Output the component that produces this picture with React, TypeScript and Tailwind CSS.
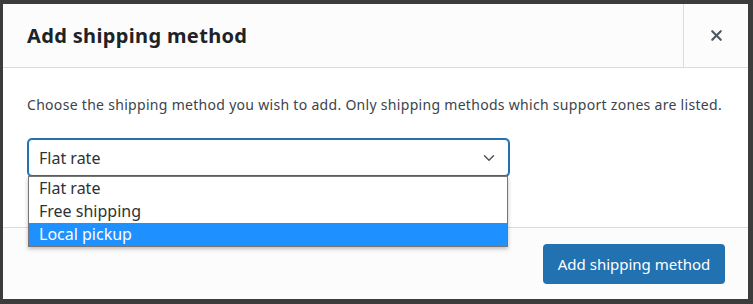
import { ChevronDown, X } from 'lucide-react'

const OPTIONS = ['Flat rate', 'Free shipping', 'Local pickup']

function App() {
    return (
        <div className="h-[304px] w-[753px] overflow-hidden bg-[#3c3c3c] pl-[3px] pt-[4px] font-['Noto_Sans','Open_Sans',sans-serif]">
            <div className="flex h-[295px] w-[745px] flex-col bg-white">
                <header className="flex h-[64px] shrink-0 items-stretch border-b border-[#dcdcde] bg-[#fcfcfc]">
                    <h1 className="flex flex-1 items-center pl-[24px] text-[20px] font-bold tracking-[0.35px] text-[#1d2327]">
                        Add shipping method
                    </h1>
                    <button className="flex w-[65px] items-center justify-center border-l border-[#dcdcde] text-[#50575e]">
                        <X size={17} strokeWidth={3} />
                    </button>
                </header>

                <div className="relative flex-1 px-[24px] pt-[26px]">
                    <p className="whitespace-nowrap text-[14px] tracking-[0.3px] text-[#3c434a]">
                        Choose the shipping method you wish to add. Only shipping methods which support zones are listed.
                    </p>
                    <div className="relative mt-[24px] ml-[1px] w-[481px]">
                        <div className="flex h-[37px] items-center justify-between rounded-[4px] border border-[#2271b1] bg-white pl-[10px] pr-[10px] shadow-[0_0_0_1px_#2271b1] text-[16px] text-[#2c3338]">
                            <span>Flat rate</span>
                            <ChevronDown size={18} strokeWidth={2} className="text-[#50575e]" />
                        </div>
                        <ul className="absolute left-0 top-[37px] z-10 w-[480px] border border-[#767676] bg-white text-[16px] leading-[23px] text-[#2c3338] shadow-[0_2px_4px_rgba(0,0,0,0.25)]">
                            {OPTIONS.map((o) => (
                                <li
                                    key={o}
                                    className={o === 'Local pickup' ? 'bg-[#1e90ff] pl-[10px] text-white' : 'pl-[10px]'}
                                >
                                    {o}
                                </li>
                            ))}
                        </ul>
                    </div>
                </div>

                <footer className="flex h-[72px] shrink-0 items-start justify-end border-t border-[#dcdcde] bg-[#fcfcfc] pr-[23px] pt-[16px]">
                    <button className="h-[40px] w-[182px] rounded-[4px] bg-[#2271b1] text-[15px] text-white">
                        Add shipping method
                    </button>
                </footer>
            </div>
        </div>
    )
}

export default App
